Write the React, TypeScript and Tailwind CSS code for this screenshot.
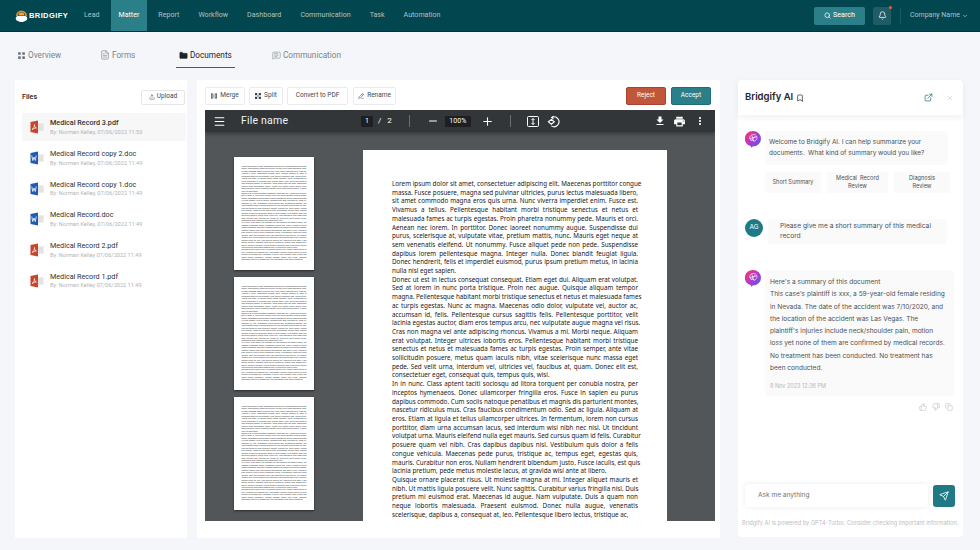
import { Bell, Bookmark, ChevronDown, Copy, ExternalLink, FileText, LayoutGrid, Menu, MessageSquareText, Minus, Plus, Search, Send, ThumbsDown, ThumbsUp, Upload, X, PencilLine, Folder } from 'lucide-react'

const NAV = ['Lead', 'Matter', 'Report', 'Workflow', 'Dashboard', 'Communication', 'Task', 'Automation']

const FILES = [
  { name: 'Medical Record 3.pdf', by: 'By: Norman Kelley, 07/06/2022 11:50', kind: 'pdf' },
  { name: 'Medical Record copy 2.doc', by: 'By: Norman Kelley, 07/06/2022 11:49', kind: 'doc' },
  { name: 'Medical Record copy 1.doc', by: 'By: Norman Kelley, 07/06/2022 11:49', kind: 'doc' },
  { name: 'Medical Record.doc', by: 'By: Norman Kelley, 07/06/2022 11:49', kind: 'doc' },
  { name: 'Medical Record 2.pdf', by: 'By: Norman Kelley 07/06/2022 11:49', kind: 'pdf' },
  { name: 'Medical Record 1.pdf', by: 'By: Norman Kelley 07/06/2022 11:49', kind: 'pdf' },
]

const SUMMARY = [
  "Here's a summary of this document",
  "This case's plaintiff is xxx, a 59-year-old female residing",
  'in Nevada. The date of the accident was 7/10/2020, and',
  'the location of the accident was Las Vegas. The',
  "plaintiff's injuries include neck/shoulder pain, motion",
  'loss yet none of them are confirmed by medical records.',
  'No treatment has been conducted. No treatment has',
  'been conducted.',
]

const DOC = [
  [
    'Lorem ipsum dolor sit amet, consectetuer adipiscing elit. Maecenas porttitor congue',
    'massa. Fusce posuere, magna sed pulvinar ultricies, purus lectus malesuada libero,',
    'sit amet commodo magna eros quis urna. Nunc viverra imperdiet enim. Fusce est.',
    'Vivamus a tellus. Pellentesque habitant morbi tristique senectus et netus et',
    'malesuada fames ac turpis egestas. Proin pharetra nonummy pede. Mauris et orci.',
    'Aenean nec lorem. In porttitor. Donec laoreet nonummy augue. Suspendisse dui',
    'purus, scelerisque at, vulputate vitae, pretium mattis, nunc. Mauris eget neque at',
    'sem venenatis eleifend. Ut nonummy. Fusce aliquet pede non pede. Suspendisse',
    'dapibus lorem pellentesque magna. Integer nulla. Donec blandit feugiat ligula.',
    'Donec hendrerit, felis et imperdiet euismod, purus ipsum pretium metus, in lacinia',
    'nulla nisl eget sapien.',
  ],
  [
    'Donec ut est in lectus consequat consequat. Etiam eget dui. Aliquam erat volutpat.',
    'Sed at lorem in nunc porta tristique. Proin nec augue. Quisque aliquam tempor',
    'magna. Pellentesque habitant morbi tristique senectus et netus et malesuada fames',
    'ac turpis egestas. Nunc ac magna. Maecenas odio dolor, vulputate vel, auctor ac,',
    'accumsan id, felis. Pellentesque cursus sagittis felis. Pellentesque porttitor, velit',
    'lacinia egestas auctor, diam eros tempus arcu, nec vulputate augue magna vel risus.',
    'Cras non magna vel ante adipiscing rhoncus. Vivamus a mi. Morbi neque. Aliquam',
    'erat volutpat. Integer ultrices lobortis eros. Pellentesque habitant morbi tristique',
    'senectus et netus et malesuada fames ac turpis egestas. Proin semper, ante vitae',
    'sollicitudin posuere, metus quam iaculis nibh, vitae scelerisque nunc massa eget',
    'pede. Sed velit urna, interdum vel, ultricies vel, faucibus at, quam. Donec elit est,',
    'consectetuer eget, consequat quis, tempus quis, wisi.',
  ],
  [
    'In in nunc. Class aptent taciti sociosqu ad litora torquent per conubia nostra, per',
    'inceptos hymenaeos. Donec ullamcorper fringilla eros. Fusce in sapien eu purus',
    'dapibus commodo. Cum sociis natoque penatibus et magnis dis parturient montes,',
    'nascetur ridiculus mus. Cras faucibus condimentum odio. Sed ac ligula. Aliquam at',
    'eros. Etiam at ligula et tellus ullamcorper ultrices. In fermentum, lorem non cursus',
    'porttitor, diam urna accumsan lacus, sed interdum wisi nibh nec nisl. Ut tincidunt',
    'volutpat urna. Mauris eleifend nulla eget mauris. Sed cursus quam id felis. Curabitur',
    'posuere quam vel nibh. Cras dapibus dapibus nisl. Vestibulum quis dolor a felis',
    'congue vehicula. Maecenas pede purus, tristique ac, tempus eget, egestas quis,',
    'mauris. Curabitur non eros. Nullam hendrerit bibendum justo. Fusce iaculis, est quis',
    'lacinia pretium, pede metus molestie lacus, at gravida wisi ante at libero.',
  ],
  [
    'Quisque ornare placerat risus. Ut molestie magna at mi. Integer aliquet mauris et',
    'nibh. Ut mattis ligula posuere velit. Nunc sagittis. Curabitur varius fringilla nisl. Duis',
    'pretium mi euismod erat. Maecenas id augue. Nam vulputate. Duis a quam non',
    'neque lobortis malesuada. Praesent euismod. Donec nulla augue, venenatis',
    'scelerisque, dapibus a, consequat at, leo. Pellentesque libero lectus, tristique ac,',
  ],
]

function PageText() {
  return (
    <>
      {DOC.map((lines, i) => (
        <div key={i}>
          {lines.map(line => (
            <div key={line} className="whitespace-nowrap [text-align-last:justify] last:[text-align-last:left]">
              {line}
            </div>
          ))}
        </div>
      ))}
    </>
  )
}

function Logo() {
  return (
    <svg width="13" height="13" viewBox="0 0 26 26">
      <path d="M2 14a11 11 0 0 1 22 0h-3.500a7.500 7.500 0 0 0-15 0z" fill="#f08a24" />
      <path d="M7 13a6 6 0 0 1 12 0z" fill="#f6a53a" />
      <path d="M6 24a5 5 0 0 1-1-9.800h16a5 5 0 0 1-1 9.800c-2 1.600-5 2-7 2s-5-.4-7-2z" fill="#fff" />
    </svg>
  )
}

function FileIcon({ kind }: { kind: string }) {
  const color = kind === 'pdf' ? '#c8452b' : '#1f5bb5'
  return (
    <svg width="14" height="14" viewBox="0 0 28 28" className="shrink-0">
      <rect x="12" y="7" width="15" height="14" fill="#dcdcdc" />
      <path d="M14 10h12M14 14h12M14 18h12" stroke="#f5f5f5" strokeWidth="1.200" />
      <path d="M1 4 16 1v26L1 24z" fill={color} />
      {kind === 'pdf' ? (
        <path d="M4 19c3-1 5-5 5-10 0 4 1 6 4 7-3 0-6 1-9 3z" fill="none" stroke="#fff" strokeWidth="1.400" />
      ) : (
        <path d="M3.500 9l2 10 2.500-7 2.500 7 2-10" fill="none" stroke="#fff" strokeWidth="1.600" />
      )}
    </svg>
  )
}

function BotAvatar() {
  return (
    <svg width="16" height="17" viewBox="0 0 32 34" className="shrink-0">
      <defs>
        <linearGradient id="bot" x1="0" y1="0" x2="1" y2="1">
          <stop offset="0.1" stopColor="#f4387a" />
          <stop offset="0.55" stopColor="#a83ad4" />
          <stop offset="1" stopColor="#3f6cf0" />
        </linearGradient>
      </defs>
      <path d="M16 0a16 15.500 0 0 1 0 31h-1l-3 3v-3.400A16 15.500 0 0 1 16 0z" fill="url(#bot)" />
      <path d="M10 11c2-4 7-5 11-3 3 2 4 6 2 9l-5 4-1-3-4 1c-3-2-4-5-3-8zM14 9l3 11M9 15l14-3M12 19l9-9" fill="none" stroke="#fff" strokeWidth="1.500" opacity=".85" />
    </svg>
  )
}

function MergeIcon() {
  return (
    <svg width="6" height="6" viewBox="0 0 12 12" fill="#3d4a4f">
      <path d="M0 1h4.500v10H0zM7.500 1H12v10H7.500zM1.500 2.500v7H3v-7zM9 2.500v7h1.500v-7z" fillRule="evenodd" />
      <path d="M5.500 5h1v2h-1z" />
    </svg>
  )
}

function SplitIcon() {
  return (
    <svg width="6" height="6" viewBox="0 0 12 12" fill="#3d4a4f">
      <path d="M0 0h4.500v4.500H0zM7.500 0H12v4.500H7.500zM0 7.500h4.500V12H0zM7.500 7.500H12V12H7.500z" />
      <path d="M4.500 4.500l3 3M7.500 4.500l-3 3" stroke="#3d4a4f" strokeWidth="1" />
    </svg>
  )
}

function TabIcon({ children }: { children: React.ReactNode }) {
  return <span className="flex h-3 w-3 items-center justify-center">{children}</span>
}

function ToolButton({ icon, label, className }: { icon?: React.ReactNode; label: string; className: string }) {
  return (
    <button className={`flex h-[18px] items-center justify-center gap-[3px] rounded-[2px] border border-[#e9ebee] bg-white text-[6.500px] text-[#3d4a4f] ${className}`}>
      {icon}
      {label}
    </button>
  )
}

function Thumb() {
  return (
    <div className="h-[113px] w-[80px] shrink-0 overflow-hidden bg-white px-[7.500px] pt-[8px] font-['Noto_Sans',sans-serif] text-[1.650px] leading-[2.450px] text-[#222] shadow-[0_1px_2px_rgba(0,0,0,0.5)]">
      <PageText />
    </div>
  )
}

export default function App() {
  return (
    <div className="flex h-[550px] w-[980px] flex-col overflow-hidden bg-[#f5f6fa] font-['Roboto',sans-serif]">
      {/* Top bar */}
      <header className="flex h-[32px] shrink-0 items-stretch border-b border-[#03333a] bg-[#02474f] pl-[15px] pr-[12px]">
        <div className="flex items-center gap-[1px]">
          <Logo />
          <span className="font-['Liberation_Sans',sans-serif] text-[7.500px] font-bold tracking-[0.4px] text-white">BRIDGIFY</span>
        </div>
        <nav className="ml-[8px] flex items-stretch gap-[3px]">
          {NAV.map(item => (
            <a
              key={item}
              className={`flex items-center px-[8px] text-[7.100px] ${item === 'Matter' ? 'bg-[#2b7f89] text-white' : 'text-[#a9c3c6]'}`}
            >
              {item}
            </a>
          ))}
        </nav>
        <div className="ml-auto flex items-center">
          <button className="flex h-[18px] w-[51px] items-center justify-center gap-[2px] rounded-[2px] bg-[#2b7f89] text-[7.200px] text-white">
            <Search size={7} strokeWidth={2.5} />
            Search
          </button>
          <div className="relative ml-[8px] flex h-[18px] w-[18px] items-center justify-center rounded-[2px] bg-[#1f5c65] text-white">
            <Bell size={9} />
            <span className="absolute right-[-1px] top-[-1px] h-[3px] w-[3px] rounded-full bg-[#e8603c]" />
          </div>
          <div className="ml-[9px] h-[16px] w-px bg-[#1a5a62]" />
          <span className="ml-[9px] text-[7px] text-[#a9c3c6]">Company Name</span>
          <ChevronDown size={6} strokeWidth={3} className="ml-[2px] text-[#a9c3c6]" />
        </div>
      </header>

      {/* Tabs */}
      <div className="flex h-[48px] shrink-0 items-start pl-[15px] pt-[17px] text-[8.200px] text-[#7b8487]">
        <div className="flex w-[84px] items-center gap-[1px]">
          <TabIcon><LayoutGrid size={9} fill="#6b7376" strokeWidth={0} /></TabIcon>
          Overview
        </div>
        <div className="flex w-[77px] items-center gap-[1px]">
          <TabIcon><FileText size={10} strokeWidth={1.5} /></TabIcon>
          Forms
        </div>
        <div className="flex h-[19px] w-[59px] items-start gap-[1px] border-b border-[#0f7480] pl-[1px] text-[#1d2427]">
          <TabIcon><Folder size={9} fill="#1d2427" strokeWidth={1} /></TabIcon>
          Documents
        </div>
        <div className="ml-[35px] flex items-center gap-[1px]">
          <TabIcon><MessageSquareText size={9} strokeWidth={1.5} /></TabIcon>
          Communication
        </div>
      </div>

      <main className="flex flex-1 items-start pl-[15px]">
        {/* Files */}
        <section className="flex h-[458px] w-[172px] shrink-0 flex-col bg-white pl-[7px] pr-px pt-[10px]">
          <div className="flex h-[14px] items-center justify-between pr-[1px]">
            <span className="text-[7.200px] font-medium text-[#1d2427]">Files</span>
            <button className="flex h-[15px] w-[44px] items-center justify-center gap-[2px] rounded-[2px] border border-[#e4e6e8] text-[6.500px] text-[#3d4a4f]">
              <Upload size={6} />
              Upload
            </button>
          </div>
          <ul className="mt-[9px] flex flex-col">
            {FILES.map((file, i) => (
              <li
                key={file.name}
                className={`flex items-center gap-[6px] pl-[8px] ${i === 0 ? 'h-[28px] bg-[#f7f7f7]' : 'h-[30.700px]'} ${i === 1 ? 'mt-[1.500px]' : ''}`}
              >
                <FileIcon kind={file.kind} />
                <div className="min-w-0 whitespace-nowrap">
                  <div className={`text-[7.200px] leading-[9.500px] text-[#2b3337] ${i === 0 ? 'font-medium' : ''}`}>{file.name}</div>
                  <div className="text-[5.600px] leading-[8px] text-[#b0b5b8]">{file.by}</div>
                </div>
              </li>
            ))}
          </ul>
        </section>

        {/* Viewer */}
        <section className="ml-[10px] flex h-[458px] w-[523px] shrink-0 flex-col bg-white px-[8px] pt-[7px]">
          <div className="flex h-[18px] items-center">
            <ToolButton className="w-[40px]" icon={<MergeIcon />} label="Merge" />
            <ToolButton className="ml-[4px] w-[34px]" icon={<SplitIcon />} label="Split" />
            <ToolButton className="ml-[4px] w-[61px]" label="Convert to PDF" />
            <ToolButton className="ml-[5px] w-[43px]" icon={<PencilLine size={6} />} label="Rename" />
            <button className="ml-auto h-[18px] w-[40px] rounded-[2px] border border-[#a8442b] bg-[#c0563a] text-[6.500px] text-white">Reject</button>
            <button className="ml-[5px] mr-[1px] h-[18px] w-[40px] rounded-[2px] border border-[#1f6d77] bg-[#2b7f89] text-[6.500px] text-white">Accept</button>
          </div>

          <div className="mt-[5px] flex h-[411px] w-[510px] flex-col overflow-hidden bg-[#525659]">
            <div className="z-10 flex h-[22px] shrink-0 items-center bg-[#323639] text-white shadow-[0_2px_4px_rgba(0,0,0,0.35)]">
              <Menu size={13} className="ml-[8px]" />
              <span className="ml-[15px] w-[120px] text-[10.500px] tracking-[0.2px] text-[#f1f3f4]">File name</span>
              <span className="flex h-[11px] w-[12px] items-center justify-center bg-[#1d1f21] text-[7px]">1</span>
              <span className="ml-[5px] text-[8px]">/</span>
              <span className="ml-[6px] text-[8px]">2</span>
              <span className="ml-[17px] h-[12px] w-px bg-[#6a6e71]" />
              <Minus size={12} className="ml-[17px]" />
              <span className="ml-[6px] flex h-[11px] w-[26px] items-center justify-center bg-[#1d1f21] text-[7px]">100%</span>
              <Plus size={13} className="ml-[10px]" />
              <span className="ml-[16px] h-[12px] w-px bg-[#6a6e71]" />
              <svg width="12" height="11" viewBox="0 0 24 22" fill="none" stroke="#fff" strokeWidth="2" className="ml-[16px]">
                <rect x="1" y="1" width="22" height="20" rx="2" />
                <path d="M12 5v12M9 8l3-3 3 3M9 14l3 3 3-3" />
              </svg>
              <svg width="13" height="13" viewBox="0 0 24 24" fill="none" stroke="#fff" strokeWidth="2" className="ml-[8px]">
                <path d="M9 4.500A9 9 0 1 1 8 20" />
                <path d="M12 2 8.500 4.700 12 7.500" />
                <path d="M8 8l5.500 4.500L8 17l-5.500-4.500z" />
              </svg>
              <svg width="12" height="12" viewBox="0 0 24 24" fill="#fff" className="ml-auto">
                <path d="M19 9h-4V3H9v6H5l7 7 7-7zM5 18v2h14v-2H5z" />
              </svg>
              <svg width="13" height="13" viewBox="0 0 24 24" fill="#fff" className="ml-[7px]">
                <path d="M19 8H5c-1.660 0-3 1.340-3 3v6h4v4h12v-4h4v-6c0-1.660-1.340-3-3-3zm-3 11H8v-5h8v5zm3-7c-.55 0-1-.45-1-1s.45-1 1-1 1 .45 1 1-.45 1-1 1zm-1-9H6v4h12V3z" />
              </svg>
              <svg width="12" height="12" viewBox="0 0 24 24" fill="#fff" className="ml-[8px] mr-[9px]">
                <path d="M12 8c1.100 0 2-.9 2-2s-.9-2-2-2-2 .9-2 2 .9 2 2 2zm0 2c-1.100 0-2 .9-2 2s.9 2 2 2 2-.9 2-2-.9-2-2-2zm0 6c-1.100 0-2 .9-2 2s.9 2 2 2 2-.9 2-2-.9-2-2-2z" />
              </svg>
            </div>
            <div className="flex flex-1 items-start overflow-hidden">
              <div className="ml-[29px] mt-[25px] flex flex-col gap-[7px]">
                <Thumb />
                <Thumb />
                <Thumb />
              </div>
              <div className="ml-[49px] mt-[18px] h-[500px] w-[304px] bg-white px-[29px] pt-[30px] font-['Noto_Sans',sans-serif] text-[6.300px] leading-[8.710px] text-[#1a1a1a]">
                <PageText />
              </div>
            </div>
          </div>
        </section>

        {/* Bridgify AI */}
        <aside className="ml-[18px] flex h-[457px] w-[225px] shrink-0 flex-col rounded-[4px] bg-white font-['Inter',sans-serif] text-[#4a5154]">
          <div className="flex h-[35px] shrink-0 items-center rounded-t-[4px] pl-[7px] pr-[9px] shadow-[0_2px_6px_rgba(30,40,60,0.07)]">
            <span className="text-[9.500px] font-semibold text-[#1d2427]">Bridgify AI</span>
            <Bookmark size={8} className="ml-[3px] text-[#1d2427]" />
            <ExternalLink size={9} className="ml-auto text-[#1f7a86]" />
            <X size={8} className="ml-[13px] text-[#c9ced0]" />
          </div>

          <div className="flex-1 px-[7px] pt-[16px] text-[6.550px]">
            <div className="flex gap-[4px]">
              <BotAvatar />
              <div>
                <div className="h-[34px] w-[183px] rounded-[3px] bg-[#fafafa] pl-[4px] pt-[6px] text-[6.400px] leading-[11px]">
                  Welcome to Bridgify AI. I can help summarize your documents.&nbsp; What kind of summary would you like?
                </div>
                <div className="mt-[7px] flex gap-[6px] text-center text-[5.600px] leading-[7.500px]">
                  <div className="flex h-[21px] w-[56px] items-center justify-center rounded-[2px] bg-[#fafafa]">Short Summary</div>
                  <div className="flex h-[21px] w-[61px] items-center justify-center rounded-[2px] bg-[#fafafa]">Medical&nbsp; Record<br />Review</div>
                  <div className="flex h-[21px] w-[56px] items-center justify-center rounded-[2px] bg-[#fafafa]">Diagnosis<br />Review</div>
                </div>
              </div>
            </div>

            <div className="mt-[26px] flex gap-[5px]">
              <div className="flex h-[18px] w-[18px] shrink-0 items-center justify-center rounded-full bg-[#1f7a86] text-[6.500px] text-white">AG</div>
              <div className="h-[25px] w-[179px] rounded-[3px] bg-[#fafafa] pl-[12px] pr-[8px] pt-[2px] text-[6.700px] leading-[10px]">
                Please give me a short summary of this medical record
              </div>
            </div>

            <div className="mt-[26px] flex gap-[4px]">
              <BotAvatar />
              <div>
                <div className="h-[126px] w-[189px] whitespace-nowrap rounded-[3px] bg-[#fafafa] pl-[5px] pr-[4px] pt-[6px] leading-[12.300px]">
                  {SUMMARY.map(line => (
                    <div key={line}>{line}</div>
                  ))}
                  <div className="mt-[6px] text-[5.500px] text-[#b5b9bb]">8 Nov 2023 12:36 PM</div>
                </div>
                <div className="mt-[7px] flex justify-end gap-[5px] pr-[1px] text-[#c3c7c9]">
                  <ThumbsUp size={8} />
                  <ThumbsDown size={8} />
                  <Copy size={8} />
                </div>
              </div>
            </div>
          </div>

          <div className="flex items-center gap-[5px] px-[7px]">
            <div className="flex h-[23px] w-[183px] items-center rounded-[4px] bg-white pl-[13px] text-[6.550px] text-[#6e7578] shadow-[0_0_5px_rgba(60,60,110,0.1)]">
              Ask me anything
            </div>
            <button className="flex h-[22px] w-[22px] items-center justify-center rounded-[3px] bg-[#1f7a86] text-white">
              <Send size={10} />
            </button>
          </div>
          <p className="mb-[9px] mt-[12px] whitespace-nowrap pl-[4px] text-[5.700px] text-[#bcc0c2]">
            Bridgify AI is powered by GPT4-Turbo. Consider checking important information.
          </p>
        </aside>
      </main>
    </div>
  )
}
